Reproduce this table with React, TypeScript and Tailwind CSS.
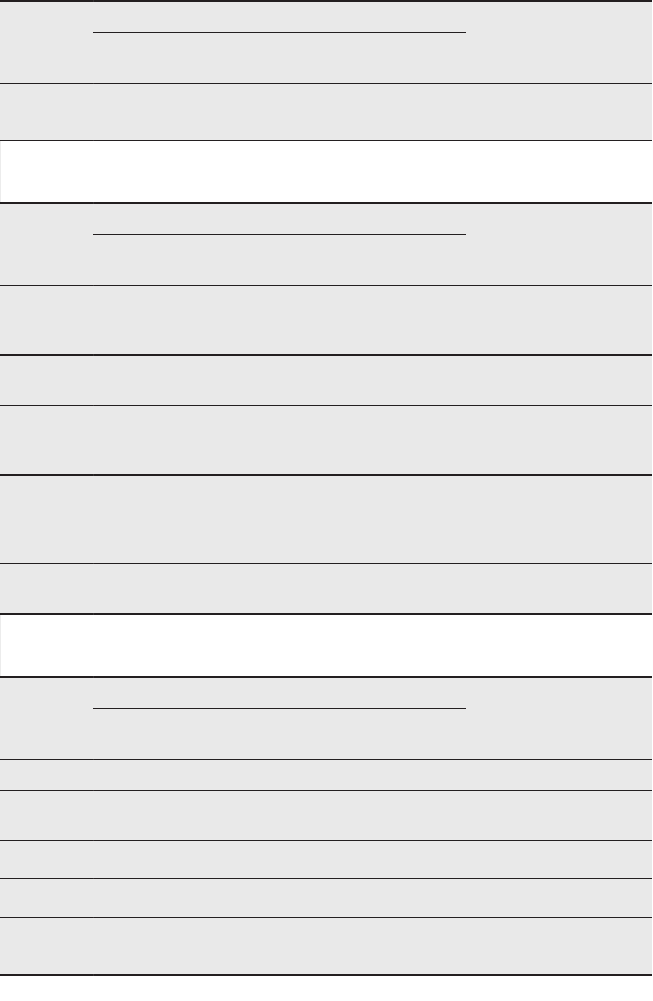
type Part =
  | { kind: 'rule'; h: number }
  | { kind: 'row'; h: number; white?: boolean; blank?: boolean };

// heights read off the scan, top to bottom
const parts: Part[] = [
  { kind: 'rule', h: 2 },
  { kind: 'row', h: 81, blank: true },
  { kind: 'rule', h: 1 },
  { kind: 'row', h: 56 },
  { kind: 'rule', h: 1 },
  { kind: 'row', h: 61, white: true },
  { kind: 'rule', h: 2 },
  { kind: 'row', h: 81, blank: true },
  { kind: 'rule', h: 1 },
  { kind: 'row', h: 68 },
  { kind: 'rule', h: 2 },
  { kind: 'row', h: 49 },
  { kind: 'rule', h: 1 },
  { kind: 'row', h: 68 },
  { kind: 'rule', h: 2 },
  { kind: 'row', h: 87 },
  { kind: 'rule', h: 1 },
  { kind: 'row', h: 49 },
  { kind: 'rule', h: 2 },
  { kind: 'row', h: 61, white: true },
  { kind: 'rule', h: 2 },
  { kind: 'row', h: 81, blank: true },
  { kind: 'rule', h: 1 },
  { kind: 'row', h: 30 },
  { kind: 'rule', h: 1 },
  { kind: 'row', h: 49 },
  { kind: 'rule', h: 1 },
  { kind: 'row', h: 37 },
  { kind: 'rule', h: 1 },
  { kind: 'row', h: 38 },
  { kind: 'rule', h: 1 },
  { kind: 'row', h: 56 },
  { kind: 'rule', h: 2 },
];

function Rule({ h }: { h: number }) {
  return (
    <div className={`flex w-full shrink-0 ${h === 2 ? 'h-[2px]' : 'h-px'}`}>
      <div className="w-[93px] bg-[#231f20]" />
      <div className="w-px bg-[#363233]" />
      <div className="flex-1 bg-[#231f20]" />
    </div>
  );
}

function Row({ white, blank }: { white?: boolean; blank?: boolean }) {
  return (
    <div
      className={`w-full ${white ? 'bg-white border-l border-[#ececec]' : 'bg-[#e9e9e9]'} ${
        blank ? 'pt-[30px]' : ''
      }`}
    >
      {blank && <div className="ml-[93px] w-[373px] h-px bg-[#231f20]" />}
    </div>
  );
}

export default function App() {
  return (
    <div className="w-[653px] h-[1001px] bg-white overflow-hidden">
      <div className="w-[652px] flex flex-col">
        {parts.map((p, i) =>
          p.kind === 'rule' ? (
            <Rule key={i} h={p.h} />
          ) : (
            <div key={i} className="flex" style={{ height: p.h }}>
              <Row white={p.white} blank={p.blank} />
            </div>
          )
        )}
      </div>
    </div>
  );
}
